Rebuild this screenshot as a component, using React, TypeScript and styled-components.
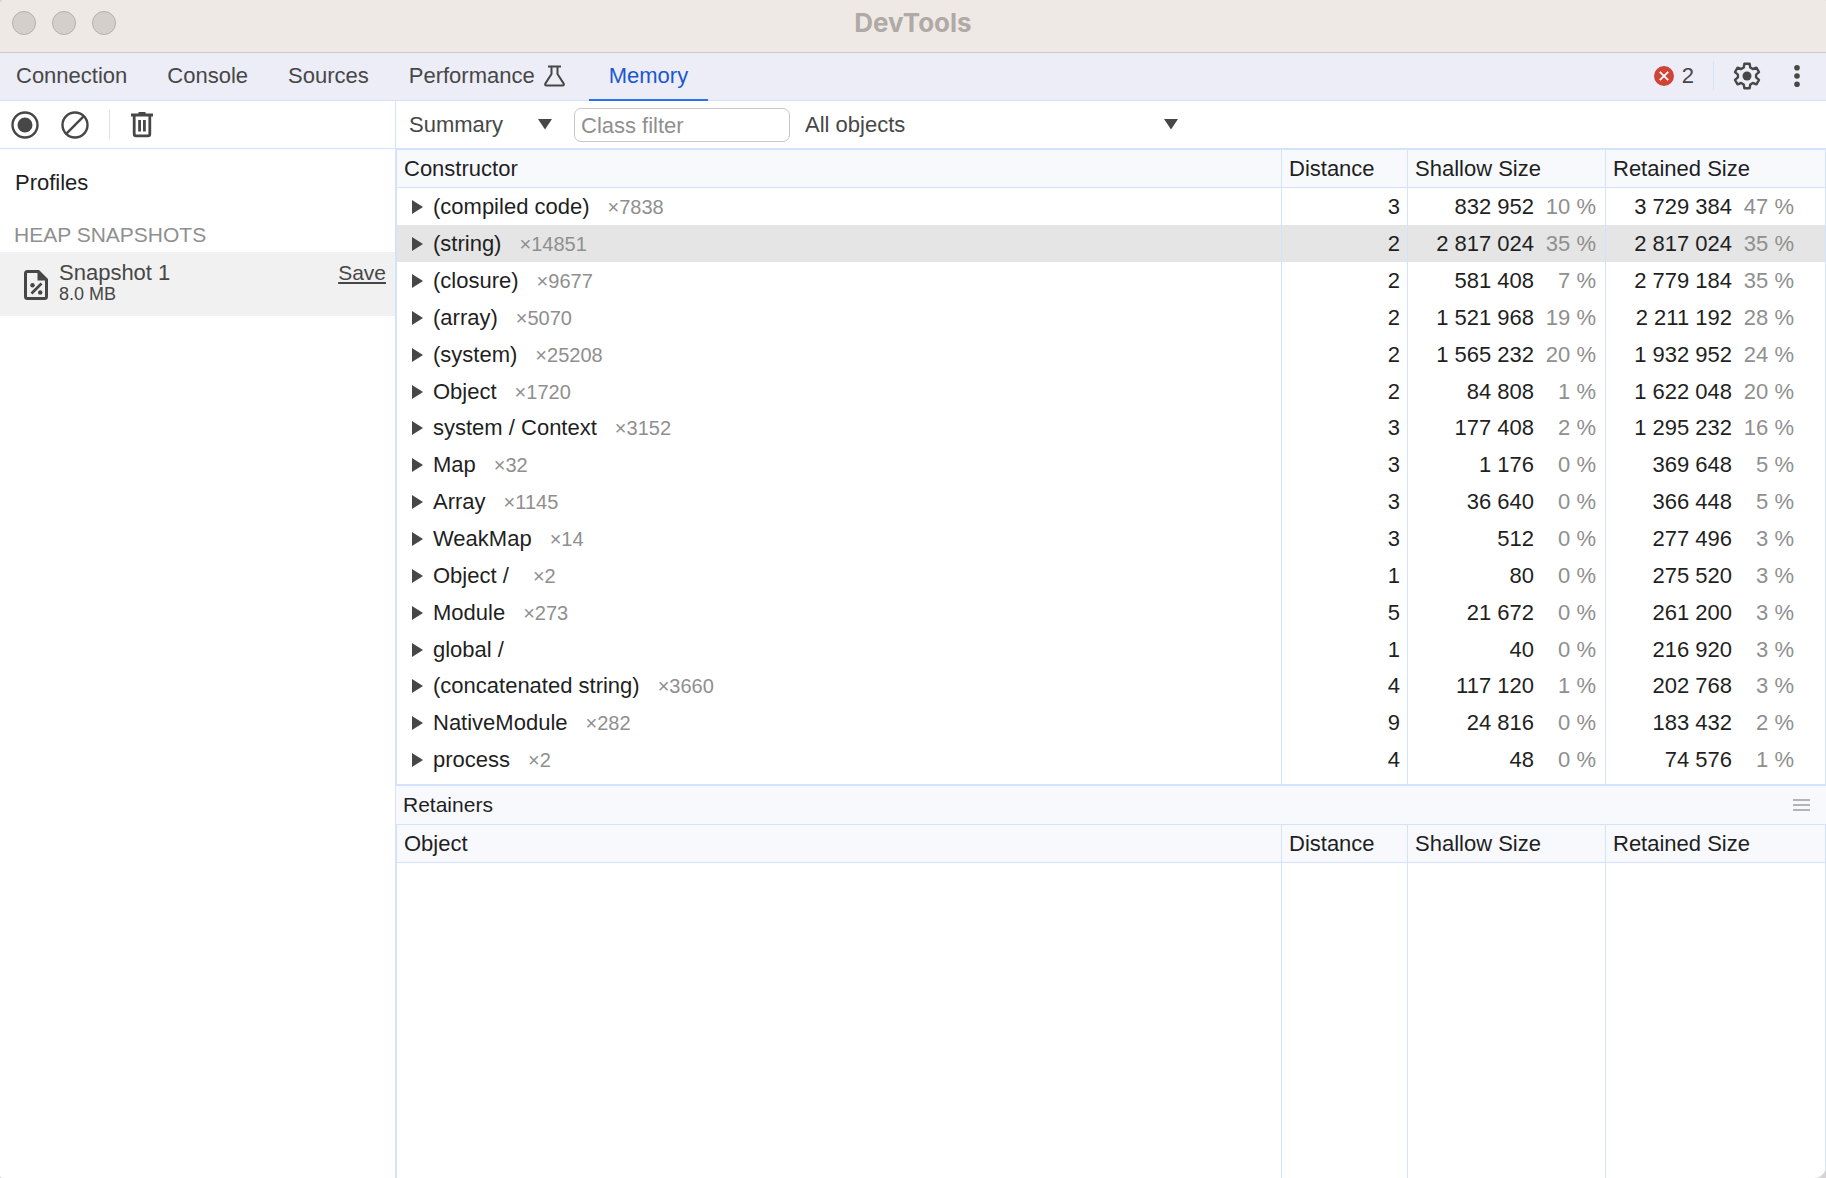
import React from 'react';
import styled, { createGlobalStyle, css } from 'styled-components';

const line = '#d3e3fd';
const ink = '#1f1f1f';
const icon = '#474747';
const muted = '#8f8f8f';
const headBg = '#f8f9fd';

const GlobalStyle = createGlobalStyle`
  * { box-sizing: border-box; }
  body {
    margin: 0;
    background: #d4d4d6;
    color: ${ink};
    font-family: "Liberation Sans", Arial, Helvetica, sans-serif;
    font-size: 22px;
    line-height: 26px;
  }
  button, input, select { font: inherit; color: inherit; }
  svg { display: block; flex: none; }
`;

const Window = styled.div`
  display: flex;
  flex-direction: column;
  height: 100vh;
  overflow: hidden;
  background: #fff;
  border-radius: 5px 2px 12px 3px;
`;

const TitleBar = styled.header`
  display: grid;
  grid-template-columns: 1fr auto 1fr;
  align-items: center;
  height: 53px;
  flex: none;
  padding: 0 12px 6px;
  background: #efe9e5;
  border-bottom: 1px solid #c9c8d0;
`;

const Lights = styled.div`
  display: flex;
  gap: 16px;
`;

const Light = styled.button`
  width: 24px;
  height: 24px;
  padding: 0;
  border: 1px solid #b5b0ad;
  border-radius: 50%;
  background: #d5cfcc;
`;

const Title = styled.h1`
  margin: 0;
  color: #b0aaa6;
  font-family: Inter, "Liberation Sans", sans-serif;
  font-size: 26px;
  font-weight: 700;
  line-height: 30px;
`;

const TabBar = styled.nav`
  display: flex;
  align-items: stretch;
  height: 48px;
  flex: none;
  background: #ededf7;
  border-bottom: 1px solid ${line};
`;

const Tabs = styled.div`
  display: flex;
  flex: 1;
  margin: 0 0 -1px -4px;
`;

const Tab = styled.button<{ $active?: boolean }>`
  display: flex;
  align-items: center;
  gap: 8px;
  padding: 0 20px;
  border: 0;
  border-bottom: 2px solid ${p => (p.$active ? '#2b71ea' : 'transparent')};
  background: none;
  color: ${p => (p.$active ? '#1b57d0' : icon)};
`;

const Tools = styled.div`
  display: flex;
  align-items: center;
  gap: 19px;
  padding: 0 12px 2px 0;
`;

const IconButton = styled.button`
  display: flex;
  align-items: center;
  gap: 8px;
  padding: 0;
  border: 0;
  background: none;
  color: ${icon};
`;

const Divider = styled.span`
  width: 1px;
  height: 29px;
  background: ${line};
`;

const Body = styled.div`
  display: flex;
  flex: 1;
  min-height: 0;
`;

const Sidebar = styled.aside`
  width: 395px;
  flex: none;
`;

const toolbar = css`
  display: flex;
  align-items: center;
  height: 48px;
  flex: none;
  border-bottom: 1px solid ${line};
`;

const SideToolbar = styled.div`
  ${toolbar}
  gap: 18px;
  padding-left: 9px;
`;

const ProfilesTitle = styled.h2`
  margin: 0;
  padding: 21px 15px 12px;
  font-size: 22px;
  font-weight: 400;
`;

const GroupTitle = styled.h3`
  margin: 0;
  padding: 14px 14px 4px;
  color: ${muted};
  font-size: 21px;
  font-weight: 400;
`;

const Snapshot = styled.div`
  display: flex;
  height: 64px;
  padding: 8px 9px 0 22px;
  background: #f1f1f1;
  color: ${icon};
`;

const SnapshotText = styled.div`
  display: flex;
  flex-direction: column;
  flex: 1;
  padding-left: 8px;
`;

const SnapshotSize = styled.span`
  font-size: 18px;
  line-height: 16px;
`;

const FileSlot = styled.span`
  padding-top: 8px;
`;

const Save = styled.a`
  color: ${icon};
  font-size: 21px;
  text-decoration: underline;
  text-decoration-thickness: 2px;
  text-underline-offset: 2px;
`;

const Main = styled.main`
  display: flex;
  flex-direction: column;
  flex: 1;
  min-width: 0;
  border-left: 1px solid ${line};
`;

const MainToolbar = styled.div`
  ${toolbar}
  gap: 2px;
  color: ${icon};
`;

const SelectBox = styled.label<{ $width: number }>`
  display: grid;
  align-items: center;
  width: ${p => p.$width}px;

  select, svg { grid-area: 1 / 1; }
  svg { justify-self: end; margin-right: 20px; pointer-events: none; }
`;

const Select = styled.select`
  appearance: none;
  width: 100%;
  height: 34px;
  padding: 0 13px;
  border: 0;
  background: none;
`;

const Filter = styled.input`
  width: 216px;
  height: 34px;
  padding: 2px 6px 0;
  border: 1px solid #c7c7c7;
  border-radius: 7px;
  background: #fff;

  &::placeholder { color: ${muted}; opacity: 1; }
`;

const Panel = styled.section<{ $fill?: boolean }>`
  flex: ${p => (p.$fill ? '1' : 'none')};
  display: flex;
  min-height: 0;
  border: 1px solid ${line};
  border-bottom-width: ${p => (p.$fill ? 0 : 1)}px;
`;

const Table = styled.table`
  flex: 1;
  width: 100%;
  table-layout: fixed;
  border-collapse: separate;
  border-spacing: 0;
`;

const Col = styled.col<{ $width?: number }>`
  width: ${p => (p.$width ? `${p.$width}px` : 'auto')};
`;

const Th = styled.th`
  height: 38px;
  padding: 0 7px;
  text-align: left;
  font-weight: 400;
  background: ${headBg};
  border-bottom: 1px solid ${line};
  &:not(:last-child) { border-right: 1px solid ${line}; }
`;

const Row = styled.tr<{ $selected?: boolean }>`
  height: 37px;
  background: ${p => (p.$selected ? '#e5e5e5' : 'transparent')};
  &:nth-child(7n) { height: 36px; }
`;

const Filler = styled.tr<{ $height?: number }>`
  height: ${p => (p.$height ? `${p.$height}px` : 'auto')};
`;

const Td = styled.td`
  padding: 0 7px 0 15px;
  text-align: right;
  white-space: nowrap;
  &:first-child { text-align: left; }
  &:last-child { padding-right: 29px; }
  &:not(:last-child) { border-right: 1px solid ${line}; }
`;

const NameCell = styled.div`
  display: flex;
  align-items: center;
`;

const Expander = styled.button`
  padding: 0;
  margin-right: 10px;
  border: 0;
  background: none;
  color: ${icon};
`;

const Count = styled.span`
  margin-left: 18px;
  color: ${muted};
  font-size: 20px;
`;

const Percent = styled.span`
  display: inline-block;
  width: 62px;
  margin-right: 2px;
  color: ${muted};
`;

const RetainersBar = styled.div`
  display: flex;
  align-items: center;
  justify-content: space-between;
  height: 39px;
  flex: none;
  padding: 0 16px 0 7px;
  background: ${headBg};
  border-top: 1px solid ${line};
`;

const BarTitle = styled.h2`
  margin: 0;
  font-size: 21px;
  font-weight: 400;
`;

const rows: [string, string, number, string, string, string, string][] = [
  ['(compiled code)', '7838', 3, '832 952', '10', '3 729 384', '47'],
  ['(string)', '14851', 2, '2 817 024', '35', '2 817 024', '35'],
  ['(closure)', '9677', 2, '581 408', '7', '2 779 184', '35'],
  ['(array)', '5070', 2, '1 521 968', '19', '2 211 192', '28'],
  ['(system)', '25208', 2, '1 565 232', '20', '1 932 952', '24'],
  ['Object', '1720', 2, '84 808', '1', '1 622 048', '20'],
  ['system / Context', '3152', 3, '177 408', '2', '1 295 232', '16'],
  ['Map', '32', 3, '1 176', '0', '369 648', '5'],
  ['Array', '1145', 3, '36 640', '0', '366 448', '5'],
  ['WeakMap', '14', 3, '512', '0', '277 496', '3'],
  ['Object /\u00a0', '2', 1, '80', '0', '275 520', '3'],
  ['Module', '273', 5, '21 672', '0', '261 200', '3'],
  ['global /', '', 1, '40', '0', '216 920', '3'],
  ['(concatenated string)', '3660', 4, '117 120', '1', '202 768', '3'],
  ['NativeModule', '282', 9, '24 816', '0', '183 432', '2'],
  ['process', '2', 4, '48', '0', '74 576', '1'],
];

const Flask = () => (
  <svg width="26" height="26" viewBox="0 0 26 26" fill="none" stroke="currentColor" strokeWidth="2" strokeLinejoin="round">
    <path d="M5 3.5H18M8.5 3.5V11L2.3 20.6Q1.6 22.5 3.5 22.5H19.5Q21.4 22.5 20.7 20.6L14.5 11V3.5" />
  </svg>
);

const ErrorIcon = () => (
  <svg width="20" height="20" viewBox="0 0 20 20">
    <circle cx="10" cy="10" r="10" fill="#d04437" />
    <path d="M5.8 5.8 14.2 14.2M14.2 5.8 5.8 14.2" stroke="#fff" strokeWidth="1.8" />
  </svg>
);

const Gear = () => (
  <svg width="28" height="28" viewBox="0 0 28 28" fill="none" stroke="currentColor" strokeWidth="2.4" strokeLinejoin="round">
    <path d="M11.4 1.8h5.2l.7 3.7 2.5 1.5 3.6-1.300 2.600 4.500-2.900 2.400v2.800l2.900 2.400-2.600 4.500-3.600-1.300-2.500 1.500-.7 3.700h-5.200l-.7-3.700-2.500-1.500-3.600 1.300L2 17.800l2.900-2.400v-2.800L2 10.200l2.600-4.500L8.200 7l2.500-1.500z" />
    <circle cx="14" cy="14" r="4.5" fill="currentColor" stroke="none" />
  </svg>
);

const Dots = () => (
  <svg width="34" height="24" viewBox="0 0 34 24" fill="currentColor">
    <circle cx="17" cy="3.7" r="2.8" />
    <circle cx="17" cy="12" r="2.8" />
    <circle cx="17" cy="20.3" r="2.8" />
  </svg>
);

const RecordIcon = () => (
  <svg width="32" height="32" viewBox="0 0 32 32">
    <circle cx="16" cy="16" r="12.5" fill="none" stroke="currentColor" strokeWidth="2.4" />
    <circle cx="16" cy="16" r="7.5" fill="currentColor" />
  </svg>
);

const ClearIcon = () => (
  <svg width="32" height="32" viewBox="0 0 32 32" fill="none" stroke="currentColor" strokeWidth="2.4">
    <circle cx="16" cy="16" r="12.5" />
    <path d="M24.8 7.2 7.2 24.8" />
  </svg>
);

const Trash = () => (
  <svg width="28" height="26" viewBox="-3 0 28 26" fill="none" stroke="currentColor" strokeWidth="2.8">
    <path d="M0 3H22M7.500 1.400H14.500M3.200 3.500V22Q3.200 23.800 5 23.800H17Q18.800 23.800 18.800 22V3.500" />
    <path d="M8.600 8V19.500M13.400 8V19.500" />
  </svg>
);

const FileIcon = () => (
  <svg width="29" height="34" viewBox="0 0 29 34" fill="none" stroke="currentColor" strokeWidth="3">
    <path d="M16.500 3.500H5.500Q3.500 3.500 3.500 5.500V28.500Q3.500 30.500 5.500 30.500H22.500Q24.500 30.500 24.500 28.500V11" />
    <path d="M15.500 2H17L26 11V12.500H15.500z" fill="currentColor" stroke="none" />
    <path d="M9.500 25.500 19.500 15.500" strokeWidth="2.600" />
    <circle cx="10.500" cy="17.300" r="2.200" fill="currentColor" stroke="none" />
    <circle cx="18.200" cy="24.500" r="2.200" fill="currentColor" stroke="none" />
  </svg>
);

const DownArrow = () => (
  <svg width="14" height="12" viewBox="0 0 14 12" fill="currentColor">
    <path d="M0 0H14L7 10.5z" />
  </svg>
);

const RightArrow = () => (
  <svg width="11" height="14" viewBox="0 0 11 14" fill="currentColor">
    <path d="M0 0 11 7 0 14z" />
  </svg>
);

const Lines = () => (
  <svg width="17" height="14" viewBox="0 0 17 14" stroke="#b4b4b6" strokeWidth="2">
    <path d="M0 2H17M0 7H17M0 12H17" />
  </svg>
);

const Columns = () => (
  <colgroup>
    <Col />
    <Col $width={126} />
    <Col $width={198} />
    <Col $width={219} />
  </colgroup>
);

const Head = ({ first }: { first: string }) => (
  <thead>
    <tr>
      {[first, 'Distance', 'Shallow Size', 'Retained Size'].map(h => (
        <Th key={h} scope="col">{h}</Th>
      ))}
    </tr>
  </thead>
);

const EmptyRow = ({ height }: { height?: number }) => (
  <Filler $height={height} aria-hidden="true">
    <Td /><Td /><Td /><Td />
  </Filler>
);

export default function App() {
  return (
    <>
      <GlobalStyle />
      <Window>
        <TitleBar>
          <Lights>
            <Light aria-label="Close" />
            <Light aria-label="Minimize" />
            <Light aria-label="Zoom" />
          </Lights>
          <Title>DevTools</Title>
        </TitleBar>

        <TabBar>
          <Tabs>
            <Tab>Connection</Tab>
            <Tab>Console</Tab>
            <Tab>Sources</Tab>
            <Tab>Performance<Flask /></Tab>
            <Tab $active>Memory</Tab>
          </Tabs>
          <Tools>
            <IconButton><ErrorIcon />2</IconButton>
            <Divider />
            <IconButton aria-label="Settings"><Gear /></IconButton>
            <IconButton aria-label="More options"><Dots /></IconButton>
          </Tools>
        </TabBar>

        <Body>
          <Sidebar>
            <SideToolbar>
              <IconButton aria-label="Take heap snapshot"><RecordIcon /></IconButton>
              <IconButton aria-label="Clear all profiles"><ClearIcon /></IconButton>
              <Divider />
              <IconButton aria-label="Delete profile"><Trash /></IconButton>
            </SideToolbar>
            <ProfilesTitle>Profiles</ProfilesTitle>
            <GroupTitle>HEAP SNAPSHOTS</GroupTitle>
            <Snapshot>
              <FileSlot><FileIcon /></FileSlot>
              <SnapshotText>
                <span>Snapshot 1</span>
                <SnapshotSize>8.0 MB</SnapshotSize>
              </SnapshotText>
              <Save href="#save">Save</Save>
            </Snapshot>
          </Sidebar>

          <Main>
            <MainToolbar>
              <SelectBox $width={176}>
                <Select aria-label="Perspective"><option>Summary</option></Select>
                <DownArrow />
              </SelectBox>
              <Filter type="text" aria-label="Class filter" placeholder="Class filter" />
              <SelectBox $width={406}>
                <Select aria-label="Base snapshot"><option>All objects</option></Select>
                <DownArrow />
              </SelectBox>
            </MainToolbar>

            <Panel>
              <Table>
                <Columns />
                <Head first="Constructor" />
                <tbody>
                  {rows.map(([name, count, distance, shallow, shallowPct, retained, retainedPct]) => (
                    <Row key={name} $selected={name === '(string)'}>
                      <Td>
                        <NameCell>
                          <Expander aria-label={`Expand ${name}`}><RightArrow /></Expander>
                          <span>{name}</span>
                          {count && <Count>×{count}</Count>}
                        </NameCell>
                      </Td>
                      <Td>{distance}</Td>
                      <Td>{shallow}<Percent>{shallowPct} %</Percent></Td>
                      <Td>{retained}<Percent>{retainedPct} %</Percent></Td>
                    </Row>
                  ))}
                  <EmptyRow height={6} />
                </tbody>
              </Table>
            </Panel>

            <RetainersBar>
              <BarTitle>Retainers</BarTitle>
              <Lines />
            </RetainersBar>

            <Panel $fill>
              <Table>
                <Columns />
                <Head first="Object" />
                <tbody>
                  <EmptyRow />
                </tbody>
              </Table>
            </Panel>
          </Main>
        </Body>
      </Window>
    </>
  );
}
